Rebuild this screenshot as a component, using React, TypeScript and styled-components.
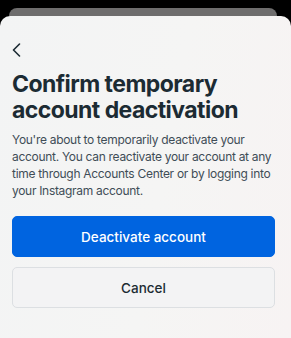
import React from "react";
import styled, { createGlobalStyle } from "styled-components";

const Global = createGlobalStyle`
  html, body { margin: 0; padding: 0; background: #000; }
  * { box-sizing: border-box; }
`;

const Screen = styled.div`
  width: 291px;
  height: 338px;
  display: flex;
  flex-direction: column;
  padding-top: 8px;
  background: #000;
  font-family: Inter, "Noto Sans", sans-serif;
  overflow: hidden;
`;

const BackSheet = styled.div`
  height: 8px;
  margin: 0 14px 0 9px;
  background: #6e6d6d;
  border-radius: 9px 9px 0 0;
  flex-shrink: 0;
`;

const Sheet = styled.div`
  flex: 1;
  display: flex;
  flex-direction: column;
  background: linear-gradient(100deg, #f3f4f4 0%, #f5f5f4 55%, #f7f3f3 100%);
  border-radius: 10px 10px 0 0;
  padding: 27px 16px 0 12px;
`;

const BackButton = styled.button`
  width: 14px;
  height: 14px;
  padding: 0;
  border: none;
  background: none;
  display: flex;
  align-items: center;
  justify-content: flex-start;
  color: #1c2b33;
`;

const Title = styled.h1`
  margin: 14px 0 0;
  font-size: 23px;
  line-height: 26px;
  font-weight: 700;
  color: #1c2b33;
  letter-spacing: -0.55px;
`;

const Body = styled.p`
  margin: 8px -2px 0 0;
  font-size: 12px;
  line-height: 17px;
  color: #3f4d57;
  letter-spacing: -0.3px;
`;

const Actions = styled.div`
  display: flex;
  flex-direction: column;
  gap: 10px;
  margin-top: 17px;
`;

const Button = styled.button<{ $primary?: boolean }>`
  height: 41px;
  width: 100%;
  border-radius: 5px;
  font-family: inherit;
  font-size: 13.5px;
  font-weight: 500;
  border: 1px solid ${(p) => (p.$primary ? "#0064e0" : "#dcdfe2")};
  background: ${(p) => (p.$primary ? "#0064e0" : "#f3f3f4")};
  color: ${(p) => (p.$primary ? "#ffffff" : "#1c2b33")};
`;

export default function App() {
  return (
    <>
      <Global />
      <Screen>
        <BackSheet />
        <Sheet>
          <BackButton aria-label="Back">
            <svg width="9" height="14" viewBox="0 0 9 14" fill="none">
              <path d="M7.5 1 L1.5 7 L7.5 13" stroke="currentColor" strokeWidth="1.6" strokeLinecap="round" strokeLinejoin="round" />
            </svg>
          </BackButton>
          <Title>Confirm temporary account deactivation</Title>
          <Body>
            You're about to temporarily deactivate your account. You can reactivate your account at any time through Accounts Center or by logging into your Instagram account.
          </Body>
          <Actions>
            <Button $primary>Deactivate account</Button>
            <Button>Cancel</Button>
          </Actions>
        </Sheet>
      </Screen>
    </>
  );
}
